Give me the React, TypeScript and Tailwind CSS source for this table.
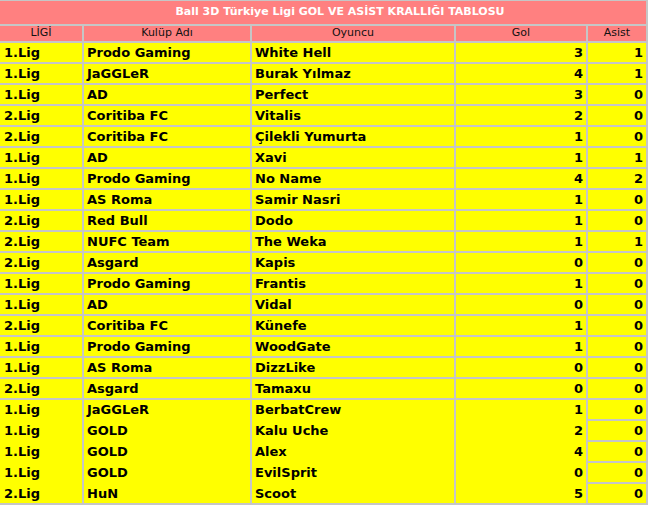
const rows: [string, string, string, number, number][] = [
  ["1.Lig", "Prodo Gaming", "White Hell", 3, 1],
  ["1.Lig", "JaGGLeR", "Burak Yılmaz", 4, 1],
  ["1.Lig", "AD", "Perfect", 3, 0],
  ["2.Lig", "Coritiba FC", "Vitalis", 2, 0],
  ["2.Lig", "Coritiba FC", "Çilekli Yumurta", 1, 0],
  ["1.Lig", "AD", "Xavi", 1, 1],
  ["1.Lig", "Prodo Gaming", "No Name", 4, 2],
  ["1.Lig", "AS Roma", "Samir Nasri", 1, 0],
  ["2.Lig", "Red Bull", "Dodo", 1, 0],
  ["2.Lig", "NUFC Team", "The Weka", 1, 1],
  ["2.Lig", "Asgard", "Kapis", 0, 0],
  ["1.Lig", "Prodo Gaming", "Frantis", 1, 0],
  ["1.Lig", "AD", "Vidal", 0, 0],
  ["2.Lig", "Coritiba FC", "Künefe", 1, 0],
  ["1.Lig", "Prodo Gaming", "WoodGate", 1, 0],
  ["1.Lig", "AS Roma", "DizzLike", 0, 0],
  ["2.Lig", "Asgard", "Tamaxu", 0, 0],
  ["1.Lig", "JaGGLeR", "BerbatCrew", 1, 0],
  ["1.Lig", "GOLD", "Kalu Uche", 2, 0],
  ["1.Lig", "GOLD", "Alex", 4, 0],
  ["1.Lig", "GOLD", "EvilSprit", 0, 0],
  ["2.Lig", "HuN", "Scoot", 5, 0],
];

const cols = "grid grid-cols-[82px_166px_202px_130px_58px] gap-x-[2px] w-[648px] pr-[2px] bg-[#c6c6c6]";

export default function App() {
  return (
    <div className="w-[650px] h-[505px] bg-white overflow-hidden" style={{ fontFamily: "'DejaVu Sans', Verdana, sans-serif" }}>
      {/* title */}
      <div className="w-[648px] pt-[1px] pb-[2px] pr-[2px] bg-[#c6c6c6]">
        <div className="h-[23px] bg-[#ff8080] flex items-center justify-center pl-[34px] text-white font-bold text-[11px]">
          Ball 3D Türkiye Ligi GOL VE ASİST KRALLIĞI TABLOSU
        </div>
      </div>

      {/* header */}
      <div className={cols}>
        {["LİGİ", "Kulüp Adı", "Oyuncu", "Gol", "Asist"].map((h) => (
          <div key={h} className="h-[15px] bg-[#ff8080] flex items-center justify-center text-[11px] text-[#111]">{h}</div>
        ))}
      </div>

      {/* rows; the last ones have no line between them except in Asist */}
      {rows.map((r, i) => {
        const open = i > 17;
        const cell = open
          ? "h-[21px] border-t-2 border-[#ffff00] bg-[#ffff00] flex items-center"
          : "h-[19px] bg-[#ffff00] flex items-center";
        const last = open
          ? "h-[21px] border-t-2 border-[#c6c6c6] bg-[#ffff00] flex items-center"
          : "h-[19px] bg-[#ffff00] flex items-center";
        return (
          <div key={i} className={cols + (open ? "" : " pt-[2px]") + " font-bold text-[13px] text-black"}>
            <div className={cell + " pl-[4px]"}>{r[0]}</div>
            <div className={cell + " pl-[3px]"}>{r[1]}</div>
            <div className={cell + " pl-[3px]"}>{r[2]}</div>
            <div className={cell + " justify-end pr-[3px]"}>{r[3]}</div>
            <div className={last + " justify-end pr-[3px]"}>{r[4]}</div>
          </div>
        );
      })}
      <div className="w-[648px] h-[2px] bg-[#c6c6c6]" />
    </div>
  );
}
